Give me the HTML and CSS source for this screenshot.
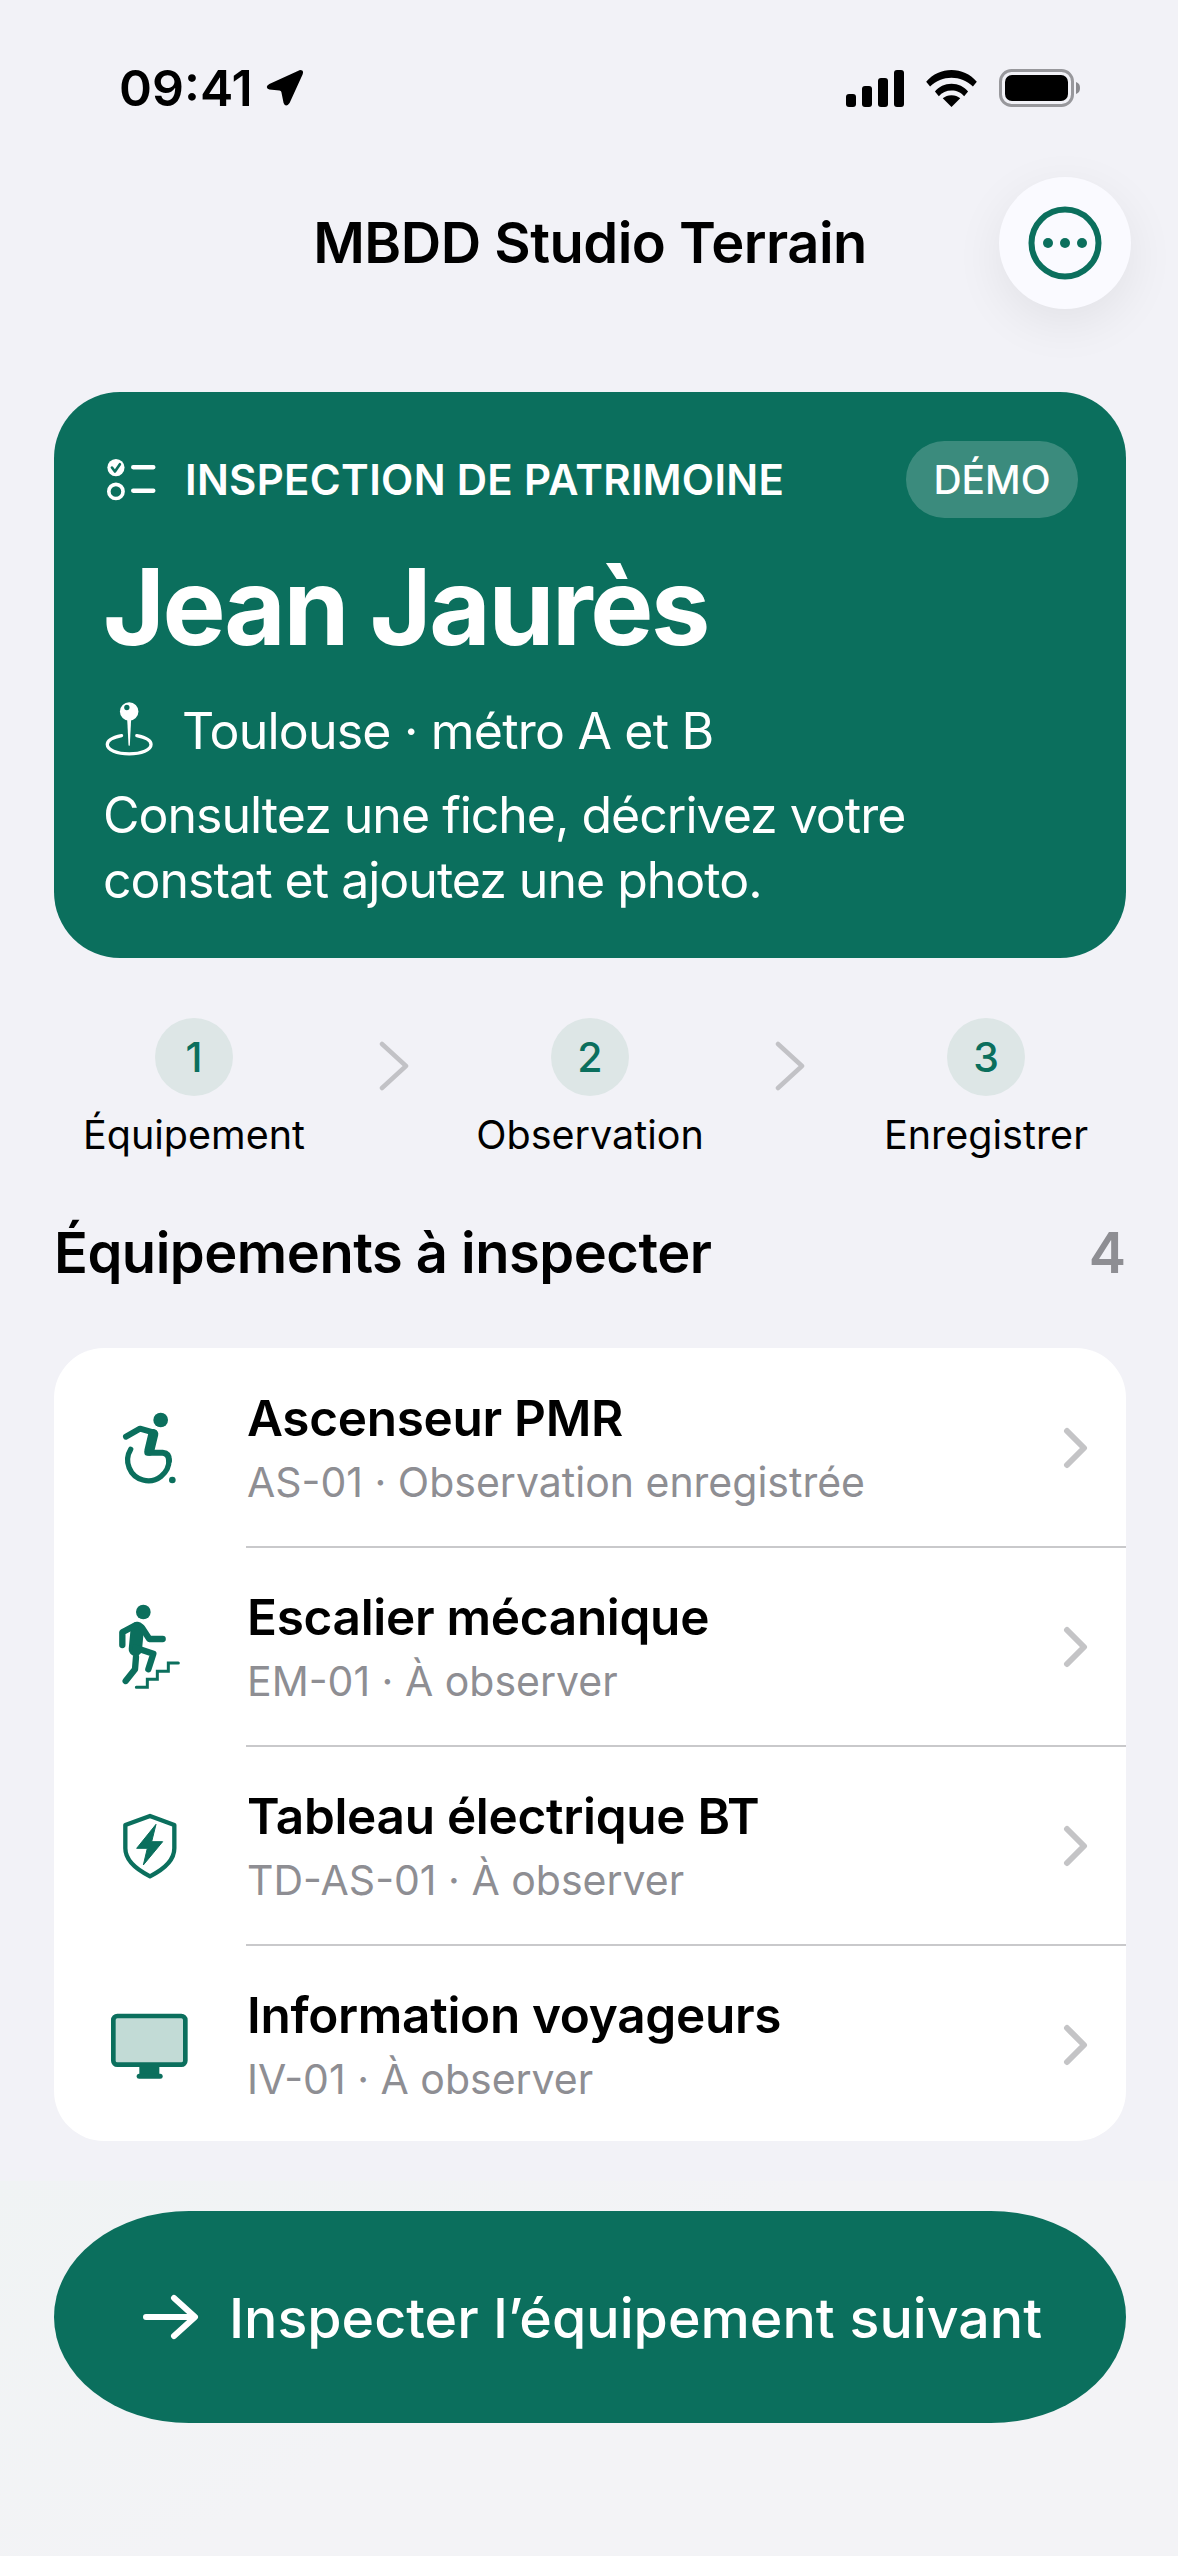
FILE: index.html
```html
<!DOCTYPE html>
<html lang="fr">
<head>
<meta charset="utf-8">
<title>MBDD Studio Terrain</title>
<link rel="stylesheet" href="styles.css">
</head>
<body>
<div class="screen">
  <header class="status">
    <div class="status-left">
      <span class="time">09:41</span>
      <svg class="loc" viewBox="495 55 125 120"><path d="M605 58Q618 58 613 72L572 162Q560 178 553 162L546 128Q545 124 540 123L508 120Q492 112 508 102Z" fill="#000"/></svg>
    </div>
    <div class="status-right">
      <svg class="signal" viewBox="0 0 58 37"><rect x="0" y="24" width="10" height="13" rx="3"/><rect x="16" y="16" width="10" height="21" rx="3"/><rect x="32" y="8" width="10" height="29" rx="3"/><rect x="48" y="0" width="10" height="37" rx="3"/></svg>
      <svg class="wifi" viewBox="0 0 52 38"><path d="M26 0C16 0 7 4 0 12l4 5c6-6 14-9 22-9s16 3 22 9l4-5C45 4 36 0 26 0z"/><path d="M26 14c-7 0-13 3-17 8l4 5c3-4 8-6 13-6s10 2 13 6l4-5c-4-5-10-8-17-8z"/><path d="M26 26c-4 0-6 1-9 3l9 9 9-9c-3-2-5-3-9-3z"/></svg>
      <svg class="battery" viewBox="0 0 82 38"><rect x="1.5" y="1.5" width="72" height="35" rx="11" fill="none" stroke="#98989c" stroke-width="3"/><rect x="6" y="6" width="63" height="26" rx="7" fill="#000"/><path d="M77 13c3 1 4 3 4 6s-1 5-4 6z" fill="#8a8a8e"/></svg>
    </div>
  </header>

  <nav class="nav">
    <h1 class="nav-title">MBDD Studio Terrain</h1>
    <button class="more" aria-label="Plus">
      <svg viewBox="0 0 74 74" class="more-icon"><circle cx="37" cy="37" r="33.5" fill="none" stroke="#0b6f5d" stroke-width="6"/><circle cx="20" cy="37" r="5" fill="#0b6f5d"/><circle cx="37" cy="37" r="5" fill="#0b6f5d"/><circle cx="54" cy="37" r="5" fill="#0b6f5d"/></svg>
    </button>
  </nav>

  <section class="hero">
    <div class="hero-top">
      <svg class="hero-check" viewBox="15 20 160 140"><circle cx="48" cy="54" r="26" fill="#fff"/><path d="M36 54L45 66L60 44" fill="none" stroke="#0b6f5d" stroke-width="8" stroke-linecap="round" stroke-linejoin="round"/><circle cx="48" cy="126" r="21.5" fill="none" stroke="#fff" stroke-width="11"/><path d="M100 53H161M100 124H161" stroke="#fff" stroke-width="13" stroke-linecap="round"/></svg>
      <span class="eyebrow">INSPECTION DE PATRIMOINE</span>
      <span class="badge">DÉMO</span>
    </div>
    <h2 class="hero-title">Jean Jaurès</h2>
    <div class="hero-loc">
      <svg class="pin" viewBox="40 36 160 180"><circle cx="119" cy="67" r="28" fill="#fff"/><circle cx="112" cy="55" r="8" fill="#0b6f5d"/><path d="M113 90H125L121 168Q119 175 117 168Z" fill="#fff"/><path d="M96 140C70 145 53 155 53 167C53 183 82 195 119 195S185 183 185 167C185 155 168 145 142 140" fill="none" stroke="#fff" stroke-width="10" stroke-linecap="round"/></svg>
      <span>Toulouse · métro A et B</span>
    </div>
    <p class="hero-desc">Consultez une fiche, décrivez votre constat et ajoutez une photo.</p>
  </section>

  <ol class="steps">
    <li class="step"><span class="step-num">1</span><span class="step-label">Équipement</span></li>
    <li class="step-sep"><svg viewBox="0 0 30 50"><path d="M3 3l24 22-24 22" fill="none" stroke="#c2c2c6" stroke-width="4.5" stroke-linecap="round" stroke-linejoin="round"/></svg></li>
    <li class="step"><span class="step-num">2</span><span class="step-label">Observation</span></li>
    <li class="step-sep"><svg viewBox="0 0 30 50"><path d="M3 3l24 22-24 22" fill="none" stroke="#c2c2c6" stroke-width="4.5" stroke-linecap="round" stroke-linejoin="round"/></svg></li>
    <li class="step"><span class="step-num">3</span><span class="step-label">Enregistrer</span></li>
  </ol>

  <div class="section-head">
    <h3 class="section-title">Équipements à inspecter</h3>
    <span class="section-count">4</span>
  </div>

  <ul class="list">
    <li class="row">
      <svg class="row-icon" viewBox="120 172 300 300">
        <circle cx="302" cy="238" r="22" fill="#0b6f5d"/>
        <path d="M198 288L240 264L282 276" fill="none" stroke="#0b6f5d" stroke-width="18" stroke-linecap="round" stroke-linejoin="round"/>
        <path d="M280 280L268 330" fill="none" stroke="#0b6f5d" stroke-width="30" stroke-linecap="round"/>
        <path d="M262 336H308Q328 338 327 360" fill="none" stroke="#0b6f5d" stroke-width="18" stroke-linecap="round"/>
        <path d="M212 326A62 62 0 1 0 327 357" fill="none" stroke="#0b6f5d" stroke-width="16" stroke-linecap="round"/>
        <circle cx="337" cy="418" r="10" fill="#0b6f5d"/>
      </svg>
      <div class="row-text"><div class="row-title">Ascenseur PMR</div><div class="row-sub">AS-01 · Observation enregistrée</div></div>
      <svg class="row-chev" viewBox="0 0 26 42"><path d="M4 4l17 17-17 17" fill="none" stroke="#c4c4c6" stroke-width="6" stroke-linecap="round" stroke-linejoin="round"/></svg>
    </li>
    <li class="row">
      <svg class="row-icon" viewBox="120 768 300 300">
        <circle cx="250" cy="813" r="22" fill="#0b6f5d"/>
        <path d="M232 862L226 925" stroke="#0b6f5d" stroke-width="40" stroke-linecap="round"/>
        <path d="M228 852L187 874V912M246 860L268 894H308" fill="none" stroke="#0b6f5d" stroke-width="19" stroke-linecap="round" stroke-linejoin="round"/>
        <path d="M226 920L280 938L265 985M228 948L225 985L197 1020" fill="none" stroke="#0b6f5d" stroke-width="19" stroke-linecap="round" stroke-linejoin="round"/>
        <path d="M229 1039H262V1015H292V991H325V966H355" fill="none" stroke="#0b6f5d" stroke-width="9" stroke-linecap="round"/>
      </svg>
      <div class="row-text"><div class="row-title">Escalier mécanique</div><div class="row-sub">EM-01 · À observer</div></div>
      <svg class="row-chev" viewBox="0 0 26 42"><path d="M4 4l17 17-17 17" fill="none" stroke="#c4c4c6" stroke-width="6" stroke-linecap="round" stroke-linejoin="round"/></svg>
    </li>
    <li class="row">
      <svg class="row-icon" viewBox="120 165 300 300">
        <path d="M270 225L343 252V322C343 358 310 386 270 406C230 386 196 358 196 322V252Z" fill="none" stroke="#0b6f5d" stroke-width="13" stroke-linejoin="round"/>
        <path d="M288 250L230 322H262L250 372L308 302H275Z" fill="#0b6f5d" stroke="#0b6f5d" stroke-width="3" stroke-linejoin="round"/>
      </svg>
      <div class="row-text"><div class="row-title">Tableau électrique BT</div><div class="row-sub">TD-AS-01 · À observer</div></div>
      <svg class="row-chev" viewBox="0 0 26 42"><path d="M4 4l17 17-17 17" fill="none" stroke="#c4c4c6" stroke-width="6" stroke-linecap="round" stroke-linejoin="round"/></svg>
    </li>
    <li class="row">
      <svg class="row-icon" viewBox="120 760 300 300">
        <rect x="160" y="823" width="216" height="146" rx="12" fill="#c2dbd6" stroke="#0b6f5d" stroke-width="14"/>
        <rect x="238" y="975" width="60" height="24" fill="#0b6f5d"/>
        <rect x="230" y="996" width="78" height="15" rx="7.5" fill="#0b6f5d"/>
      </svg>
      <div class="row-text"><div class="row-title">Information voyageurs</div><div class="row-sub">IV-01 · À observer</div></div>
      <svg class="row-chev" viewBox="0 0 26 42"><path d="M4 4l17 17-17 17" fill="none" stroke="#c4c4c6" stroke-width="6" stroke-linecap="round" stroke-linejoin="round"/></svg>
    </li>
  </ul>

  <footer class="footer">
    <button class="cta">
      <svg class="cta-arrow" viewBox="0 0 56 46"><path d="M3 23H51M31 4L52 23L31 42" fill="none" stroke="#fff" stroke-width="6" stroke-linecap="round" stroke-linejoin="round"/></svg>
      <span>Inspecter l’équipement suivant</span>
    </button>
  </footer>
</div>
</body>
</html>
```
FILE: styles.css
```css
* { box-sizing: border-box; }
html, body { margin: 0; padding: 0; }
body {
  width: 1178px;
  height: 2556px;
  background: #f2f2f7;
  font-family: Inter, "Noto Sans", sans-serif;
  color: #000;
  overflow: hidden;
}
.screen {
  width: 1178px;
  height: 2556px;
  padding: 60px 52px 0 54px;
  display: flex;
  flex-direction: column;
}
.status {
  height: 56px;
  display: flex;
  justify-content: space-between;
  align-items: center;
  padding: 0 45px 0 65px;
}
.status-left { display: flex; align-items: center; gap: 12px; }
.time { font-size: 50px; font-weight: 600; line-height: 56px; }
.loc { width: 40px; height: 38px; }
.status-right { display: flex; align-items: center; gap: 22px; }
.signal { width: 58px; height: 37px; }
.wifi { width: 51px; height: 37px; }
.battery { width: 82px; height: 38px; }
.nav {
  position: relative;
  height: 132px;
  margin-top: 61px;
  display: flex;
  align-items: center;
  justify-content: center;
}
.nav-title { margin: 0; font-size: 56px; font-weight: 600; letter-spacing: -0.5px; line-height: 64px; }
.more {
  position: absolute;
  right: -5px;
  top: 0;
  width: 132px;
  height: 132px;
  border: 0;
  border-radius: 50%;
  padding: 0;
  background: #fafaff;
  box-shadow: 0 14px 50px rgba(0,0,0,.07);
  display: flex;
  align-items: center;
  justify-content: center;
}
.more-icon { width: 74px; height: 74px; }
.hero {
  margin-top: 83px;
  height: 566px;
  background: #0b6f5d;
  border-radius: 66px;
  color: #fff;
  padding: 49px 48px 0 49px;
}
.hero-top { display: flex; align-items: center; height: 77px; }
.hero-check { width: 53px; height: 47px; margin: 0 27px 0 2px; }
.eyebrow { font-size: 42px; font-weight: 600; letter-spacing: 0.3px; flex: 1; }
.badge {
  height: 77px;
  width: 172px;
  border-radius: 39px;
  background: rgba(255,255,255,.2);
  font-size: 39px;
  font-weight: 500;
  display: flex;
  align-items: center;
  justify-content: center;
}
.hero-title { margin: 27px 0 0; font-size: 106px; line-height: 124px; font-weight: 700; letter-spacing: -2.4px; }
.hero-loc { margin-top: 32px; display: flex; align-items: center; gap: 26px; font-size: 50px; line-height: 60px; font-weight: 400; letter-spacing: -0.8px; }
.pin { width: 53px; height: 60px; flex: none; }
.hero-desc { margin: 22px 0 0; font-size: 50px; line-height: 65px; letter-spacing: -1px; width: 900px; }
.steps {
  list-style: none;
  margin: 60px 0 0;
  padding: 0;
  display: grid;
  grid-template-columns: 280px 116px 280px 116px 280px;
  justify-content: center;
}
.step { display: flex; flex-direction: column; align-items: center; }
.step-num {
  width: 78px;
  height: 78px;
  border-radius: 50%;
  background: #dde6e6;
  color: #0b6f5d;
  font-size: 41px;
  font-weight: 500;
  display: flex;
  align-items: center;
  justify-content: center;
}
.step-label { margin-top: 14px; font-size: 39.5px; line-height: 50px; white-space: nowrap; }
.step-sep { display: flex; justify-content: center; padding: 23px 0 0 4px; }
.step-sep svg { width: 30px; height: 50px; }
.section-head { margin-top: 58px; display: flex; justify-content: space-between; align-items: center; height: 70px; }
.section-title { margin: 0; font-size: 56px; font-weight: 600; letter-spacing: -0.5px; }
.section-count { font-size: 56px; font-weight: 600; color: #8e8e93; }
.list {
  list-style: none;
  margin: 60px 0 0;
  padding: 0;
  height: 793px;
  background: #fff;
  border-radius: 50px;
  overflow: hidden;
  flex: none;
}
.row { height: 199px; position: relative; display: flex; align-items: center; padding: 0 37px 0 46px; }
.row + .row::before { content: ""; position: absolute; left: 192px; right: 0; top: -1px; height: 2px; background: #c9c9cb; }
.row-icon { width: 100px; height: 100px; flex: none; margin-right: 47px; }
.row-text { flex: 1; }
.row-title { font-size: 49.5px; font-weight: 600; line-height: 60px; letter-spacing: -0.3px; }
.row-sub { margin-top: 9px; font-size: 41px; line-height: 50px; color: #8e8e93; }
.row-chev { width: 26px; height: 42px; flex: none; }
.footer {
  margin: 40px -52px 0 -54px;
  padding: 30px 52px 0 54px;
  flex: 1;
  background: linear-gradient(150deg, #f0f3f4, #f3f3f6 45%);
}
.cta {
  width: 100%;
  height: 212px;
  border: 0;
  border-radius: 135px / 106px;
  padding: 0 0 0 5px;
  background: #0b6f5d;
  color: #fff;
  font-family: inherit;
  display: flex;
  align-items: center;
  justify-content: center;
  gap: 30px;
  font-size: 55.5px;
  font-weight: 500;
}
.cta-arrow { width: 56px; height: 46px; }
```
